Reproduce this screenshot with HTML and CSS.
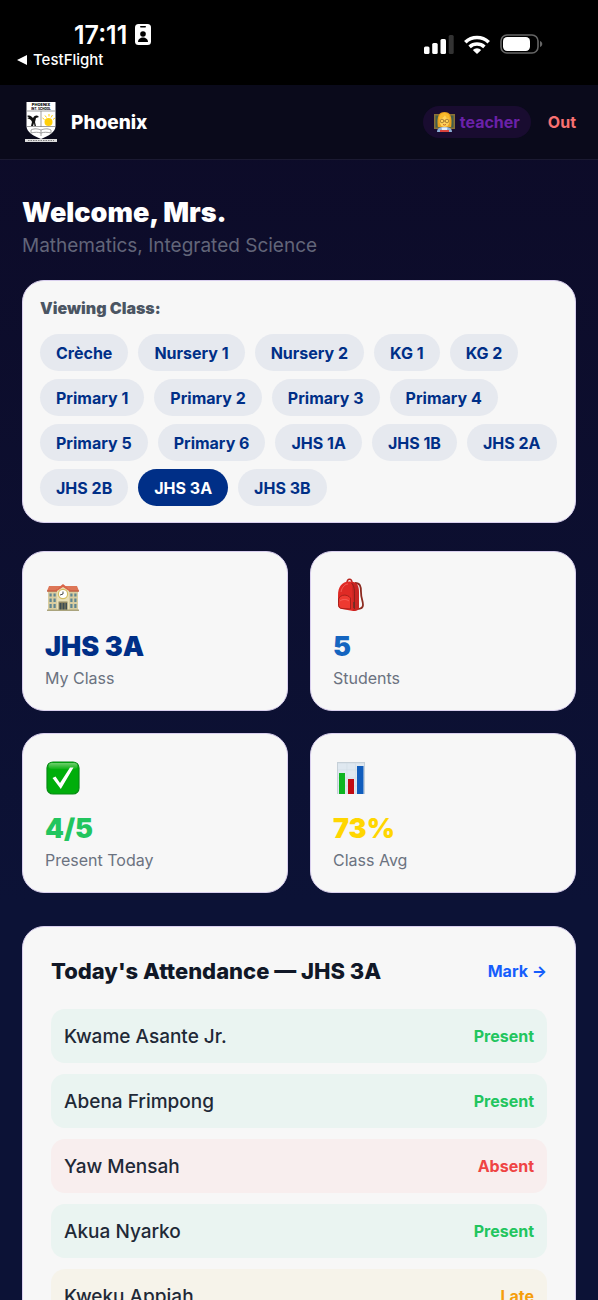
FILE: index.html
```
<!doctype html>
<html lang="en">
	<head>
		<meta charset="utf-8">
		<meta name="viewport" content="width=device-width, initial-scale=1">
		<title>Phoenix</title>
		<link rel="stylesheet" href="styles.css">
	</head>
	<body>
		<div class="status">
			<div class="status-left">
				<div class="clock">17:11
					<svg width="16" height="22" viewBox="0 0 16 22"><rect width="16" height="21" rx="3.5" fill="#fff"/><rect x="5" y="2" width="6" height="1.6" rx=".8" fill="#000"/><circle cx="8" cy="10" r="2.8" fill="#000"/><path d="M3 18c0-6 10-6 10 0z" fill="#000"/></svg>
				</div>
				<a class="back" href="#">
					<svg width="10" height="10" viewBox="0 0 10 10"><path d="M0 5 10 0v10z" fill="#fff"/></svg>
					TestFlight
				</a>
			</div>
			<div class="status-right">
				<svg width="30" height="19" viewBox="0 0 30 19"><g fill="#fff"><rect y="11.500" width="5.500" height="7.500" rx="1.500"/><rect x="8.200" y="8" width="5.500" height="11" rx="1.500"/><rect x="16.500" y="4" width="5.500" height="15" rx="1.500"/></g><rect x="24.700" width="5" height="19" rx="1.500" fill="#333"/></svg>
				<svg width="26" height="19" viewBox="0 0 26 19"><g fill="none" stroke="#fff" stroke-width="3.600"><path d="M1.300 7.200a17 17 0 0 1 23.400 0"/><path d="M5.600 11.800a11 11 0 0 1 14.800 0"/></g><path d="M13 19 8.800 14.900a6.300 6.300 0 0 1 8.400 0z" fill="#fff"/></svg>
				<svg width="43" height="20" viewBox="0 0 43 20"><rect x="1" y="1" width="37" height="18" rx="6" fill="none" stroke="#666" stroke-width="1.600"/><rect x="3" y="3" width="27" height="14" rx="4.200" fill="#fff"/><path d="M40 7c3 1 3 5 0 6z" fill="#666"/></svg>
			</div>
		</div>

		<nav class="nav">
			<a class="brand" href="#">
				<svg width="32" height="42" viewBox="0 0 32 42">
					<path d="M1.500 1h29v24c0 6-7 10-14.500 13C8.500 35 1.500 31 1.500 25z" fill="#fff"/>
					<text x="16" y="5" class="crest-name">PHOENIX</text>
					<text x="16" y="8.500" class="crest-sub">INT. SCHOOL</text>
					<path d="M2 10h28M16 10v16M2 25.500h28" fill="none" stroke="#777" stroke-width=".7"/>
					<path d="M2 15c3-1 4 0 6 2 2-3 4-3 6-1l-3 1-1 4 1 4H9.500L9 22l-1 3H6l1-4c-1-3-3-3-5-4l2-.500z" fill="#111"/>
					<circle cx="23.500" cy="21" r="4" fill="#ffcf0a"/>
					<path d="m17.500 17 2 1.500M20 14.500l1.500 2M24 13v2.500M27.500 14l-1.500 2.500M30 17l-2 1.500" stroke="#ffcf0a" stroke-width="1"/>
					<path d="M6 29c4-2 7-1 10 0 3-1 6-2 10 0v3c-4-1-7-1-10 0-3-1-6-1-10 0zM16 29v6" fill="none" stroke="#888" stroke-width=".8"/>
					<path d="M0 38h32v3H0z" fill="#ddd"/>
					<path d="M3 39.500h26" stroke="#666" stroke-width=".8" stroke-dasharray="1.500 1" fill="none"/>
				</svg>
				Phoenix
			</a>
			<div class="nav-actions">
				<span class="role">
					<svg width="21" height="20" viewBox="0 0 21 20"><path d="M0 2h21v15H0z" fill="#8b7135"/><path d="M1.500 3.500h18v12h-18z" fill="#405c4d"/><path d="M3.800 15C2.500 4 5 0 10.500 0S18.500 4 17.200 15z" fill="#e8a11e"/><ellipse cx="10.500" cy="9" rx="5" ry="6" fill="#ffd25a"/><path d="M5 7c3 0 5-2 6-4 1 3 3 4 5 4-.500-4-2-6-5.500-6S5.500 3 5 7z" fill="#f7b92c"/><g fill="none" stroke="#8a6022" stroke-width=".7"><circle cx="8" cy="9" r="1.800"/><circle cx="13" cy="9" r="1.800"/><path d="M9.800 9h1.400"/></g><path d="M9 12.500q1.500 1 3 0" stroke="#b04a23" stroke-width=".8" fill="none"/><path d="M3 20c0-4 3-5 7.500-5s7.500 1 7.500 5z" fill="#8eb0d6"/><path d="M7.500 15.500h6L12.500 20h-4z" fill="#e3eefa"/><path d="M6 18h9v2H6z" fill="#d8433d"/></svg>
					teacher
				</span>
				<a class="out" href="#">Out</a>
			</div>
		</nav>

		<main class="main">
			<header class="welcome">
				<h1>Welcome, Mrs.</h1>
				<p>Mathematics, Integrated Science</p>
			</header>

			<section class="card classes">
				<h2>Viewing Class:</h2>
				<div class="chips">
					<button class="chip" type="button">Crèche</button>
					<button class="chip" type="button">Nursery 1</button>
					<button class="chip" type="button">Nursery 2</button>
					<button class="chip" type="button">KG 1</button>
					<button class="chip" type="button">KG 2</button>
					<button class="chip" type="button">Primary 1</button>
					<button class="chip" type="button">Primary 2</button>
					<button class="chip" type="button">Primary 3</button>
					<button class="chip" type="button">Primary 4</button>
					<button class="chip" type="button">Primary 5</button>
					<button class="chip" type="button">Primary 6</button>
					<button class="chip" type="button">JHS 1A</button>
					<button class="chip" type="button">JHS 1B</button>
					<button class="chip" type="button">JHS 2A</button>
					<button class="chip" type="button">JHS 2B</button>
					<button class="chip active" type="button">JHS 3A</button>
					<button class="chip" type="button">JHS 3B</button>
				</div>
			</section>

			<section class="stats">
				<div class="card stat">
					<svg width="36" height="36" viewBox="0 0 36 36">
						<path d="M3 13h30v19H3z" fill="#d9cda0"/>
						<path d="M4 8h28l2 5H2z" fill="#dd7657"/>
						<path d="M2 12.500h32v1.200H2z" fill="#b9563c"/>
						<path d="M12 11l6-4 6 4v21H12z" fill="#e9dfb6"/>
						<path d="M10.500 12 18 6l7.500 6-1.500 1L18 9l-6 4z" fill="#d9654a"/>
						<circle cx="18" cy="16" r="5.200" fill="#d3bd62"/><circle cx="18" cy="16" r="4" fill="#fff"/>
						<path d="M18 13.500V16l-3 1" stroke="#333" stroke-width=".9" fill="none"/>
						<path d="M4.500 15.500h2.200v3H4.500zM8.500 15.500h2.200v3H8.500zM4.500 20.500h2.200V24H4.500zM8.500 20.500h2.200V24H8.500zM4.500 26h2.200v4H4.500zM8.500 26h2.200v4H8.500zM25.300 15.500h2.200v3h-2.200zM29.300 15.500h2.200v3h-2.200zM25.300 20.500h2.200V24h-2.200zM29.300 20.500h2.200V24h-2.200zM25.300 26h2.200v4h-2.200zM29.300 26h2.200v4h-2.200z" fill="#5f8590"/>
						<path d="M13.500 23.500h9V32h-9z" fill="#8d8460"/>
						<path d="M14.500 25h2v7h-2zM17.500 25h2v7h-2zM20.500 25h1.500v7h-1.500z" fill="#3d4c52"/>
						<path d="M2 31.500h32V33H2z" fill="#aaa47d"/>
					</svg>
					<strong class="navy">JHS 3A</strong>
					<span>My Class</span>
				</div>
				<div class="card stat">
					<svg width="36" height="36" viewBox="0 0 36 36">
						<path d="M22 5c5 0 6 3 6 9 0 7 2 8 2 13 0 4-4 4-6 4" fill="none" stroke="#8c2b20" stroke-width="1.800"/>
						<path d="M14 5c0-5 5-5 5 0" fill="none" stroke="#b8241e" stroke-width="1.500"/>
						<path d="M5 18C5 8 9 4 16 3.500c7-.500 9 3 9 10V29c0 3-2 4-5 4L9 31c-3-.500-4-2-4-5z" fill="#df2a25"/>
						<path d="M19 4c5 0 7 4 7 10v15c0 3-2 4-6 4z" fill="#c92522"/>
						<path d="M18.500 5c3 3 3 7 3 13v13" fill="none" stroke="#84201a" stroke-width=".9"/>
						<path d="M5.500 21c2-5 9-5 12-1v11L9 30.500c-3-.500-3.500-2-3.500-5z" fill="#ee3a31" stroke="#9e1e18" stroke-width=".9"/>
						<path d="M7 23c2-2 7-2 9 0M8 14c1-5 4-8 7-8" fill="none" stroke="#fa7067" stroke-width=".7"/>
						<path d="M21 24v6" stroke="#673128" stroke-width="1.500"/>
					</svg>
					<strong class="blue">5</strong>
					<span>Students</span>
				</div>
				<div class="card stat">
					<svg width="36" height="36" viewBox="0 0 36 36">
						<defs><linearGradient id="shine" x2="0" y2="1"><stop stop-color="#6fce6d"/><stop offset="1" stop-color="#0fb217"/></linearGradient></defs>
						<rect x="2" y="2" width="32" height="32" rx="6" fill="#00ae0b" stroke="#078a14" stroke-width="1.200"/>
						<rect x="3.500" y="3" width="29" height="6" rx="3" fill="url(#shine)"/>
						<path d="m7.500 18 3-1.500 4.500 6.500L25 7.500h3.500L15.800 29z" fill="#fff"/>
					</svg>
					<strong class="green">4/5</strong>
					<span>Present Today</span>
				</div>
				<div class="card stat">
					<svg width="36" height="36" viewBox="0 0 36 36">
						<path d="M4 2h28v32H4z" fill="#dfe8f0"/>
						<path d="M4 2h28v1.200H4zM4 2h1v32H4zM31 2h1v32h-1z" fill="#c6d0d8"/>
						<path d="M5 10h26M5 18h26M5 26h26M14 3v31M22.500 3v31" stroke="#d3dee7" stroke-width=".7"/>
						<path d="M6 13h6v21H6z" fill="#0db520"/><path d="M15 19h6v15h-6z" fill="#c20b12"/><path d="M24 6h6.500v28H24z" fill="#105dbd"/>
					</svg>
					<strong class="yellow">73%</strong>
					<span>Class Avg</span>
				</div>
			</section>

			<section class="card attendance">
				<div class="attendance-head">
					<h2>Today's Attendance — JHS 3A</h2>
					<a href="#">Mark →</a>
				</div>
				<ul>
					<li class="present"><span>Kwame Asante Jr.</span><b>Present</b></li>
					<li class="present"><span>Abena Frimpong</span><b>Present</b></li>
					<li class="absent"><span>Yaw Mensah</span><b>Absent</b></li>
					<li class="present"><span>Akua Nyarko</span><b>Present</b></li>
					<li class="late"><span>Kweku Appiah</span><b>Late</b></li>
				</ul>
			</section>
		</main>
	</body>
</html>
```
FILE: styles.css
```
* {
	box-sizing: border-box;
}
body {
	margin: 0;
	background: #0c1236 linear-gradient(#0d0a26, #0c1236 900px);
	font-family: Inter, "Liberation Sans", sans-serif;
	color: #fff;
}
a {
	color: inherit;
	text-decoration: none;
}
svg {
	display: block;
	flex: none;
}
h1, h2, p, ul {
	margin: 0;
	padding: 0;
}

/* phone status bar */
.status {
	display: flex;
	justify-content: space-between;
	height: 85px;
	padding: 21px 55px 0 17px;
	background: #000;
}
.clock {
	display: flex;
	align-items: center;
	gap: 8px;
	padding-left: 57px;
	font-size: 25px;
	line-height: 28px;
	font-weight: 600;
}
.back {
	display: flex;
	align-items: center;
	gap: 6px;
	font-size: 15px;
	line-height: 22px;
	font-weight: 500;
}
.status-right {
	display: flex;
	align-items: center;
	gap: 10px;
	height: 46px;
}

.nav {
	display: flex;
	align-items: center;
	justify-content: space-between;
	height: 75px;
	padding: 0 22px;
	background: #0a0a1b;
	border-bottom: 1px solid #1b1a32;
}
.brand {
	display: flex;
	align-items: center;
	gap: 14px;
	padding-left: 3px;
	font-size: 19px;
	font-weight: 800;
}
.crest-name {
	font-size: 4px;
	font-weight: 800;
	text-anchor: middle;
}
.crest-sub {
	font-size: 3px;
	text-anchor: middle;
}
.nav-actions {
	display: flex;
	align-items: center;
	gap: 17px;
	font-size: 16px;
	font-weight: 700;
}
.role {
	display: flex;
	align-items: center;
	gap: 5px;
	height: 32px;
	padding: 0 11px;
	border-radius: 16px;
	background: #190c30;
	color: #6b21a8;
}
.out {
	color: #f87171;
}

.main {
	padding: 34px 22px;
}
.welcome h1 {
	font-size: 27px;
	line-height: 37px;
	font-weight: 900;
}
.welcome p {
	color: #626579;
	font-size: 19px;
	line-height: 29px;
}
.card {
	background: #f7f7f7;
	border: 1px solid #d9cfee;
	border-radius: 22px;
}

.classes {
	margin-top: 20px;
	padding: 16px 17px;
}
.classes h2 {
	margin-bottom: 14px;
	color: #4b5563;
	font-size: 16px;
	line-height: 23px;
	font-weight: 900;
}
.chips {
	display: flex;
	flex-wrap: wrap;
	gap: 8px 10px;
}
.chip {
	height: 37px;
	padding: 0 16px;
	border: 0;
	border-radius: 19px;
	background: #e6e9ef;
	color: #002f87;
	font: 700 16px Inter, "Liberation Sans", sans-serif;
}
.chip.active {
	background: #002f87;
	color: #fff;
}

.stats {
	display: grid;
	grid-template-columns: 1fr 1fr;
	gap: 22px;
	margin-top: 28px;
}
.stat {
	display: flex;
	flex-direction: column;
	height: 160px;
	padding: 26px 22px 0;
}
.stat strong {
	margin-top: 15px;
	font-size: 27px;
	line-height: 36px;
	font-weight: 900;
}
.stat span {
	margin-top: 1px;
	color: #6b7280;
	font-size: 16px;
	line-height: 25px;
}
.navy { color: #002f87; }
.blue { color: #1565c0; }
.green { color: #22c55e; }
.yellow { color: #ffd600; }

.attendance {
	margin-top: 33px;
	padding: 28px;
}
.attendance-head {
	display: flex;
	align-items: center;
	justify-content: space-between;
	margin-bottom: 22px;
}
.attendance-head h2 {
	color: #111827;
	font-size: 22px;
	line-height: 32px;
	font-weight: 800;
}
.attendance-head a {
	color: #155dfc;
	font-size: 16px;
	font-weight: 700;
}
.attendance ul {
	display: grid;
	gap: 11px;
	list-style: none;
}
.attendance li {
	display: flex;
	align-items: center;
	justify-content: space-between;
	height: 54px;
	padding: 0 13px;
	border-radius: 14px;
	color: #1f2937;
	font-size: 19px;
	font-weight: 500;
}
.attendance b {
	font-size: 16px;
	font-weight: 700;
}
.present { background: #eaf4f1; }
.present b { color: #22c55e; }
.absent { background: #f8eeee; }
.absent b { color: #ef4444; }
.late { background: #f6f3ea; }
.late b { color: #f59e0b; }
```
